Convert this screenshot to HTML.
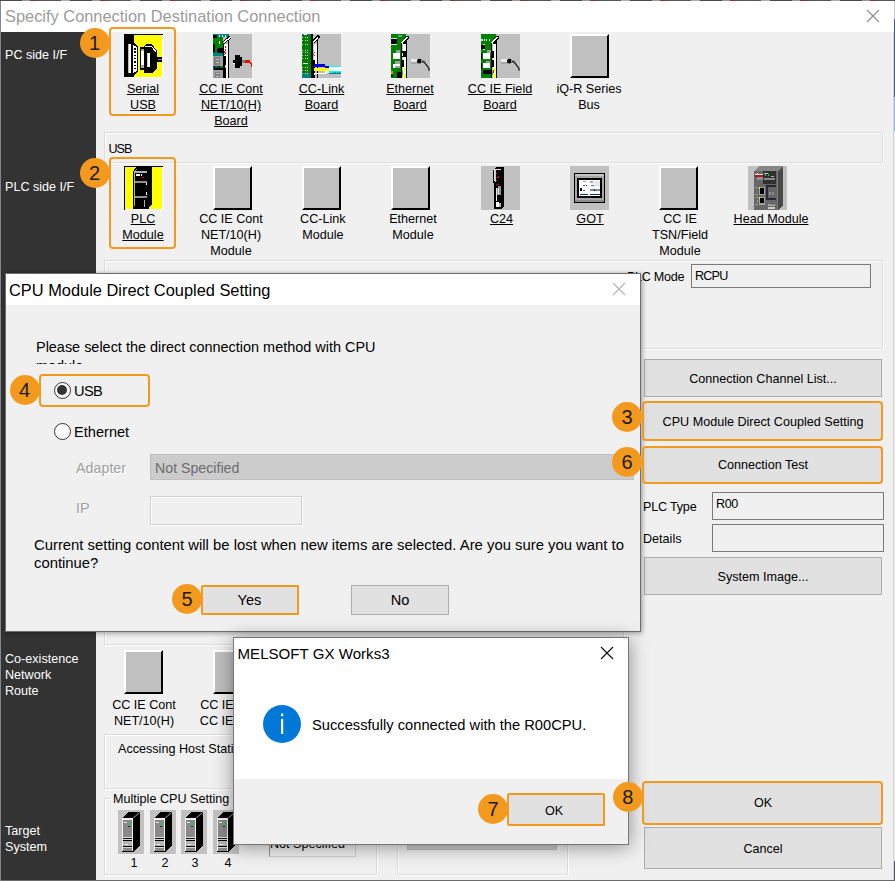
<!DOCTYPE html>
<html lang="en">
<head>
<meta charset="utf-8">
<title>Specify Connection Destination Connection</title>
<style>
*{box-sizing:border-box;margin:0;padding:0}
html,body{width:895px;height:881px;overflow:hidden}
body{position:relative;background:#f0f0f0;font-family:"Liberation Sans",sans-serif;font-size:12.6px;color:#000;line-height:16px}
.abs{position:absolute}
#win{position:absolute;left:0;top:0;width:895px;height:881px;overflow:hidden;background:#f0f0f0}
#topnoise{position:absolute;left:0;top:0;width:895px;height:1px;background:repeating-linear-gradient(90deg,#4a4a4a 0,#4a4a4a 22px,#999 22px,#999 30px,#7a3a3a 30px,#7a3a3a 36px,#555 36px,#555 61px,#aab 61px,#aab 70px)}
#titlebar{position:absolute;left:1px;top:1px;width:893px;height:31px;background:#fff}
#titlebar .t{position:absolute;left:4px;top:4px;font-size:16.4px;line-height:22px;color:#9c9c9c;white-space:nowrap}
#side{position:absolute;left:1px;top:32px;width:95px;height:849px;background:#333}
.sl{position:absolute;left:4px;color:#fff;white-space:nowrap;font-size:12.6px;line-height:16px}
.lbl{position:absolute;width:120px;text-align:center;white-space:nowrap;font-size:12.6px;line-height:16px}
.lbl.u{text-decoration:underline}
.gb{position:absolute;border:1px solid #dcdcdc;box-shadow:inset 1px 1px 0 #fff, 1px 1px 0 #fff}
.btn{position:absolute;background:#e1e1e1;border:1px solid #adadad;text-align:center;white-space:nowrap;font-size:12.6px}
.obox{position:absolute;border:2px solid #f39a1e;border-radius:4px}
.badge{position:absolute;width:30px;height:30px;border-radius:50%;background:#f39a1e;color:#1a1a1a;font-size:20px;line-height:30px;text-align:center}
.fld{position:absolute;border:1px solid #7a7a7a;background:#f0f0f0;font-size:12.6px;padding-left:4px;white-space:nowrap;overflow:hidden}
.raised{position:absolute;width:39px;height:44px;background:#c0c0c0;border-top:2px solid #fff;border-left:2px solid #fff;border-right:2px solid #000;border-bottom:2px solid #000}
.txt{position:absolute;white-space:nowrap}
.dlg{position:absolute;background:#f0f0f0;border:1px solid #6e6e6e;box-shadow:0 0 0 1px rgba(0,0,0,.10), 1px 2px 7px rgba(0,0,0,.5)}
.radio{position:absolute;width:17px;height:17px;border-radius:50%;border:1.4px solid #333;background:#fff}
.radio.on:after{content:"";position:absolute;left:2.1px;top:2.1px;width:10px;height:10px;border-radius:50%;background:#333}
</style>
</head>
<body>
<div id="win">

<div id="topnoise"></div>
<div id="titlebar"><span class="t">Specify Connection Destination Connection</span><svg class="abs" style="left:865px;top:8px" width="14" height="14" viewBox="0 0 14 14"><path d="M1 1L13 13M13 1L1 13" stroke="#8c8c8c" stroke-width="1.1" fill="none"/></svg></div>
<div id="side">
<span class="sl" style="top:15px">PC side I/F</span>
<span class="sl" style="top:147px">PLC side I/F</span>
<span class="sl" style="top:619px">Co-existence</span>
<span class="sl" style="top:635px">Network</span>
<span class="sl" style="top:651px">Route</span>
<span class="sl" style="top:791px">Target</span>
<span class="sl" style="top:807px">System</span>
</div>
<div class="abs" style="left:893px;top:32px;width:1px;height:849px;background:#d4d4d4"></div>
<div class="abs" style="left:894px;top:1px;width:1px;height:880px;background:linear-gradient(180deg,#ccc 0,#ccc 18px,#4a5a70 18px,#4a5a70 96px,#a8b8d0 96px,#a8b8d0 130px,#ececec 130px,#ececec 860px,#556 860px)"></div>
<div class="abs" style="left:0;top:879.5px;width:895px;height:1.5px;background:#6c6c6c"></div>
<div class="abs" style="left:0;top:1px;width:1px;height:880px;background:#84878e"></div>
<svg class="abs" style="left:124px;top:34px" width="39" height="44" viewBox="0 0 39 44" shape-rendering="crispEdges"><rect x="0" y="0" width="39" height="44" fill="#ffff00"/><rect x="0" y="0" width="10" height="44" fill="#000"/><rect x="0" y="0" width="39" height="1" fill="#000"/><path d="M10 9L14 12V38L10 41Z" fill="#000"/><rect x="4" y="10" width="3" height="29" fill="#fff"/><rect x="4" y="10" width="1" height="29" fill="#bbb"/><path d="M9 11L12.5 13V37L9 39Z" fill="#fff"/><rect x="10" y="14.0" width="1.5" height="1.5" fill="#000"/><rect x="10" y="17.3" width="1.5" height="1.5" fill="#000"/><rect x="10" y="20.6" width="1.5" height="1.5" fill="#000"/><rect x="10" y="23.9" width="1.5" height="1.5" fill="#000"/><rect x="10" y="27.2" width="1.5" height="1.5" fill="#000"/><rect x="10" y="30.5" width="1.5" height="1.5" fill="#000"/><rect x="10" y="33.8" width="1.5" height="1.5" fill="#000"/><path d="M16 13H20L22 10H28L33 17V35L28 39H20V36H16Z" fill="#000"/><rect x="17" y="15" width="3" height="19" fill="#fff"/><rect x="17" y="15" width="3" height="2" fill="#aaa"/><rect x="17" y="31" width="3" height="3" fill="#aaa"/><rect x="23" y="19" width="3" height="14" fill="#fff"/><rect x="23" y="19" width="1" height="14" fill="#ccc"/><path d="M21 12H27L31 16.5V18" stroke="#fff" stroke-width="1" fill="none"/><rect x="33" y="23" width="5" height="4.5" fill="#000"/><rect x="33.5" y="24.8" width="4.5" height="1" fill="#888"/><rect x="38" y="1" width="1" height="43" fill="#fff"/><rect x="0" y="43" width="39" height="1" fill="#fff"/></svg>
<svg class="abs" style="left:213px;top:34px" width="39" height="44" viewBox="0 0 39 44" shape-rendering="crispEdges"><rect x="0" y="0" width="39" height="44" fill="#c0c0c0"/><rect x="0" y="0" width="16" height="3" fill="#008080"/><rect x="6" y="1" width="1.2" height="1.6" fill="#fff"/><rect x="9" y="1" width="1.2" height="1.6" fill="#fff"/><rect x="11.5" y="1" width="1.2" height="1.6" fill="#fff"/><rect x="0" y="3" width="10" height="16" fill="#008000"/><rect x="0" y="1" width="4" height="3" fill="#000"/><rect x="0" y="10" width="1.5" height="8" fill="#000"/><rect x="4.5" y="7" width="0.8" height="3.5" fill="#fff"/><rect x="6.2" y="7" width="0.8" height="3" fill="#fff"/><rect x="5" y="14" width="5" height="5" fill="#000"/><rect x="4.3" y="15" width="1" height="3" fill="#000080"/><rect x="0" y="19" width="9.5" height="2.5" fill="#008080"/><rect x="0" y="22" width="9.5" height="10" fill="#a0a0a0"/><rect x="1" y="23" width="6" height="7.5" fill="#808080"/><rect x="2.5" y="24.8" width="3" height="1" fill="#c0c0c0"/><rect x="2.5" y="27.6" width="3" height="1" fill="#c0c0c0"/><rect x="0" y="32" width="9.5" height="2" fill="#008000"/><rect x="1.2" y="32" width="1" height="2" fill="#000080"/><rect x="4" y="32" width="1" height="2" fill="#000080"/><rect x="6.2" y="32" width="1" height="2" fill="#000080"/><rect x="0" y="34" width="9.5" height="2" fill="#000"/><rect x="0" y="34" width="1" height="2" fill="#008080"/><rect x="0" y="36" width="9.5" height="8" fill="#a0a0a0"/><rect x="1.5" y="37.5" width="5" height="6.5" fill="#808080"/><rect x="2.5" y="39" width="3" height="1" fill="#c0c0c0"/><rect x="2.5" y="41.5" width="3" height="1" fill="#c0c0c0"/><rect x="9.5" y="10" width="1.2" height="34" fill="#000"/><rect x="10.7" y="10" width="4.6" height="34" fill="#fff"/><rect x="15.2" y="5" width="1.2" height="39" fill="#000"/><path d="M10 9.5L17 3" stroke="#000" stroke-width="3.2"/><path d="M10.5 9L17.5 3" stroke="#fff" stroke-width="1.4"/><rect x="12" y="12" width="1" height="1.5" fill="#f00"/><rect x="12" y="15" width="1" height="1.5" fill="#f00"/><rect x="11.2" y="17.3" width="1" height="1.2" fill="#f00"/><rect x="12" y="18.3" width="1" height="1.2" fill="#f00"/><rect x="11.3" y="19.5" width="1" height="1.6" fill="#f00"/><rect x="11" y="22" width="1.6" height="22" fill="#000"/><rect x="12.4" y="31" width="0.8" height="3" fill="#c0c0c0"/><rect x="22" y="21" width="5" height="13" fill="#000"/><rect x="20" y="25.5" width="9" height="4.8" fill="#000"/><rect x="27" y="23" width="1.5" height="9" fill="#000"/><rect x="20" y="26.5" width="1.6" height="0.9" fill="#fff"/><rect x="20" y="28.6" width="1.6" height="0.9" fill="#fff"/><rect x="29" y="26" width="3" height="2.5" fill="#808080"/><rect x="32" y="26" width="5" height="2.6" fill="#f00"/><rect x="36.5" y="27.5" width="1.5" height="2" fill="#f00"/><rect x="37.8" y="29" width="1.2" height="4" fill="#f00"/></svg>
<svg class="abs" style="left:302px;top:34px" width="39" height="44" viewBox="0 0 39 44" shape-rendering="crispEdges"><rect x="0" y="0" width="39" height="44" fill="#c0c0c0"/><rect x="0" y="0" width="9.5" height="44" fill="#008000"/><rect x="0" y="39" width="9.5" height="5" fill="#008080"/><rect x="0" y="0" width="2" height="1" fill="#008080"/><rect x="5" y="0" width="4.5" height="1" fill="#008080"/><rect x="2" y="0" width="3" height="1" fill="#fff"/><rect x="0.3" y="3" width="1" height="1.2" fill="#e8c8e8"/><rect x="2.8" y="3" width="1.6" height="1.2" fill="#e8c8e8"/><rect x="5.4" y="3" width="1" height="1.2" fill="#e8c8e8"/><rect x="0.3" y="5.5" width="1" height="1.2" fill="#e8c8e8"/><rect x="2.8" y="5.5" width="1.6" height="1.2" fill="#e8c8e8"/><rect x="5.4" y="5.5" width="1" height="1.2" fill="#e8c8e8"/><rect x="0.3" y="10" width="1" height="1.2" fill="#e8c8e8"/><rect x="2.8" y="10" width="1.6" height="1.2" fill="#e8c8e8"/><rect x="5.4" y="10" width="1" height="1.2" fill="#e8c8e8"/><rect x="0.3" y="15.5" width="1" height="1.2" fill="#e8c8e8"/><rect x="2.8" y="15.5" width="1.6" height="1.2" fill="#e8c8e8"/><rect x="5.4" y="15.5" width="1" height="1.2" fill="#e8c8e8"/><rect x="0.3" y="18" width="1" height="1.2" fill="#e8c8e8"/><rect x="2.8" y="18" width="1.6" height="1.2" fill="#e8c8e8"/><rect x="5.4" y="18" width="1" height="1.2" fill="#e8c8e8"/><rect x="0.3" y="21" width="1" height="1.2" fill="#e8c8e8"/><rect x="2.8" y="21" width="1.6" height="1.2" fill="#e8c8e8"/><rect x="5.4" y="21" width="1" height="1.2" fill="#e8c8e8"/><rect x="0.3" y="23.5" width="1" height="1.2" fill="#e8c8e8"/><rect x="2.8" y="23.5" width="1.6" height="1.2" fill="#e8c8e8"/><rect x="5.4" y="23.5" width="1" height="1.2" fill="#e8c8e8"/><rect x="0.3" y="33" width="1" height="1.2" fill="#e8c8e8"/><rect x="2.8" y="33" width="1.6" height="1.2" fill="#e8c8e8"/><rect x="5.4" y="33" width="1" height="1.2" fill="#e8c8e8"/><rect x="0.3" y="36" width="1" height="1.2" fill="#e8c8e8"/><rect x="2.8" y="36" width="1.6" height="1.2" fill="#e8c8e8"/><rect x="5.4" y="36" width="1" height="1.2" fill="#e8c8e8"/><rect x="0.3" y="39" width="1" height="1.2" fill="#e8c8e8"/><rect x="2.8" y="39" width="1.6" height="1.2" fill="#e8c8e8"/><rect x="5.4" y="39" width="1" height="1.2" fill="#e8c8e8"/><rect x="0.5" y="28.5" width="5.5" height="1.5" fill="#fff"/><rect x="9.3" y="0" width="1.5" height="44" fill="#000"/><path d="M11 8L17 2" stroke="#000" stroke-width="3.4"/><path d="M11.2 8L16 3.2" stroke="#fff" stroke-width="1.3"/><rect x="10.8" y="10" width="4.4" height="20" fill="#fff"/><rect x="10.8" y="10" width="1.5" height="20" fill="#c0c0c0"/><rect x="15.2" y="6" width="1" height="38" fill="#000"/><rect x="10.8" y="26" width="2.5" height="18" fill="#000"/><rect x="11.6" y="18" width="1.6" height="1" fill="#f00"/><rect x="11.2" y="19.5" width="1" height="1.2" fill="#f00"/><rect x="12.2" y="21" width="1" height="1.4" fill="#f00"/><rect x="12" y="30" width="11" height="3.4" fill="#0000e0"/><rect x="23" y="32" width="4" height="2" fill="#0000c0"/><rect x="11.5" y="30.5" width="0.8" height="2.5" fill="#fff"/><rect x="12" y="34.2" width="15" height="2.5" fill="#ffff00"/><rect x="11.5" y="34.2" width="0.8" height="2.5" fill="#fff"/><rect x="27" y="31.6" width="12" height="1" fill="#00ffff"/><rect x="26" y="30" width="1" height="2" fill="#00ffff"/><rect x="27" y="32.6" width="12" height="4.4" fill="#fff"/><rect x="27" y="37" width="12" height="2.6" fill="#00ffff"/><rect x="27" y="39.4" width="12" height="0.8" fill="#008080"/><rect x="28.5" y="37.6" width="0.8" height="2" fill="#008080"/><rect x="30.7" y="37.6" width="0.8" height="2" fill="#008080"/><rect x="32.9" y="37.6" width="0.8" height="2" fill="#008080"/><rect x="35.1" y="37.6" width="0.8" height="2" fill="#008080"/><rect x="37.3" y="37.6" width="0.8" height="2" fill="#008080"/><rect x="23" y="37.4" width="4" height="1.6" fill="#fff"/><rect x="12" y="38.8" width="12" height="1.2" fill="#fff"/><rect x="11.5" y="38.5" width="1" height="2" fill="#fff"/></svg>
<svg class="abs" style="left:391px;top:34px" width="39" height="44" viewBox="0 0 39 44" shape-rendering="crispEdges"><rect x="0" y="0" width="39" height="44" fill="#c0c0c0"/><rect x="0" y="0" width="15" height="44" fill="#008000"/><rect x="7" y="0.5" width="3.5" height="2.5" fill="#909090"/><rect x="0" y="5.2" width="6" height="4.8" fill="#000"/><rect x="0" y="4.4" width="6" height="0.6" fill="#e0e0e0"/><rect x="0" y="10.2" width="6" height="0.6" fill="#e0e0e0"/><rect x="2.2" y="19" width="7" height="6" fill="#fff"/><rect x="5" y="16" width="4" height="3" fill="#a0a0a0"/><rect x="2.2" y="29.5" width="7" height="4" fill="#fff"/><rect x="4" y="27" width="5" height="2.5" fill="#a0a0a0"/><rect x="4" y="32" width="5" height="1.5" fill="#a0a0a0"/><rect x="0" y="37" width="1.6" height="3" fill="#c0a000"/><rect x="0" y="40.5" width="1.8" height="2.5" fill="#000"/><rect x="6" y="38" width="3.5" height="6" fill="#000"/><path d="M9.5 44V9L16 1.5H18V4L16.4 6V44Z" fill="#000"/><path d="M10.8 9.2L16.6 2.6" stroke="#fff" stroke-width="1.5"/><rect x="11" y="10" width="4.2" height="34" fill="#fff"/><rect x="11" y="10" width="1.3" height="34" fill="#c0c0c0"/><rect x="10.4" y="17" width="5" height="6" fill="#000"/><rect x="11.4" y="18.5" width="1" height="3.5" fill="#fff"/><rect x="11" y="26" width="1.6" height="7" fill="#000"/><rect x="12.5" y="34" width="2.2" height="3" fill="#ffff00"/><rect x="12.5" y="40" width="2.2" height="3.5" fill="#ffff00"/><rect x="10.6" y="37" width="1.2" height="4" fill="#00e000"/><rect x="15.2" y="6" width="1.2" height="38" fill="#000"/><rect x="20.2" y="25" width="6.3" height="4.6" fill="#e8e8e8"/><rect x="20.2" y="27.6" width="6.3" height="2" fill="#a8a8a8"/><circle cx="28.4" cy="27.2" r="2.4" fill="#000" shape-rendering="auto"/><rect x="30" y="26.2" width="3.5" height="1.8" fill="#909090"/><path d="M31 27.5L33.5 28.5L38 34.5V36.8" stroke="#000" stroke-width="1.1" fill="none" shape-rendering="auto"/></svg>
<svg class="abs" style="left:481px;top:34px" width="39" height="44" viewBox="0 0 39 44" shape-rendering="crispEdges"><rect x="0" y="0" width="39" height="44" fill="#c0c0c0"/><rect x="0" y="0" width="15" height="44" fill="#008000"/><rect x="0.3" y="5.4" width="1.2" height="1.4" fill="#e0e0e0"/><rect x="2.8" y="5.4" width="1.2" height="1.4" fill="#e0e0e0"/><rect x="5.2" y="5.4" width="1.2" height="1.4" fill="#e0e0e0"/><rect x="7.6" y="5.4" width="1.2" height="1.4" fill="#e0e0e0"/><rect x="0" y="11.2" width="4" height="3.6" fill="#000"/><rect x="1.5" y="10" width="2" height="0.8" fill="#e0e0e0"/><rect x="1.5" y="15.4" width="2" height="0.8" fill="#e0e0e0"/><rect x="2" y="19" width="7" height="6" fill="#fff"/><rect x="5.5" y="16" width="4" height="3" fill="#a0a0a0"/><rect x="0" y="19" width="1" height="6.5" fill="#000"/><rect x="2" y="29" width="7" height="5" fill="#fff"/><rect x="5" y="26.5" width="4" height="2" fill="#a0a0a0"/><rect x="0" y="29" width="1" height="6" fill="#000"/><rect x="2" y="36" width="8" height="4" fill="#000"/><path d="M9.5 44V9L16 1.5H18V4L16.4 6V44Z" fill="#000"/><path d="M10.8 9.2L16.6 2.6" stroke="#fff" stroke-width="1.5"/><rect x="11" y="10" width="4.2" height="34" fill="#fff"/><rect x="11" y="10" width="1.3" height="34" fill="#c0c0c0"/><rect x="11" y="17" width="1.6" height="7" fill="#000"/><rect x="11" y="26" width="1.6" height="7" fill="#000"/><rect x="12.5" y="34" width="2.2" height="3" fill="#ffff00"/><rect x="12.5" y="40" width="2.2" height="3.5" fill="#ffff00"/><rect x="10.6" y="37" width="1.2" height="4" fill="#00e000"/><rect x="12.2" y="36" width="0.9" height="3" fill="#f00"/><rect x="15.2" y="6" width="1.2" height="38" fill="#000"/><rect x="20.2" y="25" width="6.3" height="4.6" fill="#e8e8e8"/><rect x="20.2" y="27.6" width="6.3" height="2" fill="#a8a8a8"/><circle cx="28.4" cy="27.2" r="2.4" fill="#000" shape-rendering="auto"/><rect x="30" y="26.2" width="3.5" height="1.8" fill="#909090"/><path d="M31 27.5L33.5 28.5L38 34.5V36.8" stroke="#000" stroke-width="1.1" fill="none" shape-rendering="auto"/></svg>
<div class="raised" style="left:570px;top:34px"></div>
<div class="lbl u" style="left:83px;top:81px">Serial</div>
<div class="lbl u" style="left:83px;top:97px">USB</div>
<div class="lbl u" style="left:171px;top:81px">CC IE Cont</div>
<div class="lbl u" style="left:171px;top:97px">NET/10(H)</div>
<div class="lbl u" style="left:171px;top:113px">Board</div>
<div class="lbl u" style="left:261.5px;top:81px">CC-Link</div>
<div class="lbl u" style="left:261.5px;top:97px">Board</div>
<div class="lbl u" style="left:350px;top:81px">Ethernet</div>
<div class="lbl u" style="left:350px;top:97px">Board</div>
<div class="lbl u" style="left:440px;top:81px">CC IE Field</div>
<div class="lbl u" style="left:440px;top:97px">Board</div>
<div class="lbl" style="left:529px;top:81px">iQ-R Series</div>
<div class="lbl" style="left:529px;top:97px">Bus</div>
<div class="gb" style="left:104px;top:132px;width:779px;height:31px"></div>
<div class="txt" style="left:108.5px;top:141px;letter-spacing:-1px">USB</div>
<svg class="abs" style="left:124px;top:166px" width="39" height="44" viewBox="0 0 39 44" shape-rendering="crispEdges"><rect x="0" y="0" width="39" height="44" fill="#ffff00"/><path d="M9 44V5.5L12 1H28V38L24 43.5V44Z" fill="#000"/><rect x="9.6" y="5.2" width="13.6" height="1.4" fill="#b0b0b0"/><rect x="9.6" y="5.2" width="1.1" height="35" fill="#b0b0b0"/><path d="M9.8 5.5L12.5 2.5" stroke="#b0b0b0" stroke-width="0.8"/><rect x="12.2" y="8.2" width="3.6" height="1.6" fill="#fff"/><rect x="17.2" y="8.2" width="1" height="1.8" fill="#fff"/><rect x="18" y="11" width="2" height="0.9" fill="#f00"/><rect x="10.5" y="15.2" width="12.8" height="1.4" fill="#909090"/><rect x="21.5" y="16.8" width="1.8" height="2" fill="#fff"/><rect x="21.5" y="26" width="1.8" height="2.6" fill="#fff"/><rect x="10.5" y="30" width="12.8" height="1.5" fill="#909090"/><rect x="20.2" y="34" width="0.9" height="6.6" fill="#b0b0b0"/><rect x="0" y="0" width="39" height="1" fill="#000"/><rect x="0" y="0" width="1" height="44" fill="#000"/><rect x="38" y="1" width="1" height="43" fill="#fff"/><rect x="1" y="43" width="38" height="1" fill="#fff"/></svg>
<div class="raised" style="left:213px;top:166px"></div>
<div class="raised" style="left:302px;top:166px"></div>
<div class="raised" style="left:391px;top:166px"></div>
<svg class="abs" style="left:481px;top:166px" width="39" height="44" viewBox="0 0 39 44" shape-rendering="crispEdges"><rect x="0" y="0" width="39" height="44" fill="#c0c0c0"/><path d="M13 43V17H12V4L15 1H23V40L21 43Z" fill="#000"/><path d="M13.2 15V4.5L14.5 3.2H20" stroke="#e0e0e0" stroke-width="1" fill="none"/><rect x="13.8" y="4" width="1.4" height="11.5" fill="#c8c8c8"/><rect x="15" y="7" width="1.1" height="1.3" fill="#f00"/><rect x="15" y="11" width="1.1" height="1.3" fill="#f00"/><rect x="15" y="14" width="1.1" height="1.3" fill="#f00"/><rect x="17.2" y="10.2" width="1.1" height="1.3" fill="#f00"/><rect x="15" y="18" width="1.1" height="1.3" fill="#f00"/><rect x="17" y="18" width="1.1" height="1.3" fill="#f00"/><rect x="15" y="19.5" width="4.6" height="9" fill="#909090"/><rect x="15" y="22" width="1.3" height="13" fill="#e8e8e8"/><rect x="17" y="22" width="1.2" height="6" fill="#e8e8e8"/><rect x="15" y="19.5" width="2" height="2" fill="#000"/><rect x="15.2" y="36" width="3" height="4.6" fill="#fff"/><rect x="18.2" y="37" width="1.5" height="3.6" fill="#b0b0b0"/></svg>
<svg class="abs" style="left:570px;top:166px" width="39" height="44" viewBox="0 0 39 44" shape-rendering="crispEdges"><rect x="0" y="0" width="39" height="44" fill="#c0c0c0"/><rect x="4" y="7" width="31" height="30" fill="#000"/><rect x="5" y="8" width="29" height="28" fill="#a8a8a8"/><rect x="5" y="8" width="29" height="2.4" fill="#c4c4c4"/><rect x="5" y="33.6" width="29" height="2.4" fill="#8c8c8c"/><rect x="7" y="12" width="25" height="20" fill="#000"/><rect x="9" y="14" width="21" height="16" fill="#fff"/><rect x="13" y="15" width="3" height="1.2" fill="#9ab"/><rect x="20" y="15" width="3" height="1.6" fill="#9ab"/><rect x="13" y="19" width="2" height="1.4" fill="#468"/><rect x="16" y="19" width="1" height="1.4" fill="#036"/><rect x="21" y="19" width="3" height="1.4" fill="#579"/><rect x="10" y="22.4" width="2" height="3" fill="#012"/><rect x="12.6" y="24" width="2" height="1" fill="#357"/><rect x="20" y="23" width="10" height="1.5" fill="#789"/><rect x="24" y="23" width="1" height="1.5" fill="#036"/><rect x="10" y="28" width="8" height="1" fill="#036"/><rect x="20" y="28" width="10" height="1" fill="#036"/><rect x="24" y="14.5" width="6" height="6" fill="#e4e8f0"/></svg>
<div class="raised" style="left:659px;top:166px"></div>
<svg class="abs" style="left:748px;top:166px" width="39" height="44" viewBox="0 0 39 44" shape-rendering="crispEdges"><rect x="0" y="0" width="39" height="44" fill="#c0c0c0"/><path d="M6 44V5L11 0H35V39L30 44Z" fill="#484848"/><path d="M6 5L11 0H35L30 5Z" fill="#868686"/><rect x="6" y="5" width="23" height="39" fill="#686868"/><rect x="29" y="5" width="1.2" height="39" fill="#787878"/><rect x="15" y="5" width="13" height="12.5" fill="#303030"/><rect x="7" y="7.5" width="8" height="1.8" fill="#e8e8e8"/><rect x="7" y="9.3" width="8" height="1.2" fill="#b01010"/><rect x="9" y="6.5" width="1.2" height="1" fill="#e8e8e8"/><rect x="9" y="11.2" width="5.6" height="2.4" fill="#909090"/><rect x="16" y="7" width="4" height="0.8" fill="#c0c0c0"/><rect x="16.8" y="8" width="1.5" height="2" fill="#00e040"/><rect x="19.8" y="8" width="1.5" height="2" fill="#00e040"/><rect x="23" y="9.6" width="3" height="0.9" fill="#b0b0b0"/><rect x="16" y="12" width="11" height="1.8" fill="#8c8c8c"/><rect x="18" y="19" width="10" height="14.5" fill="#282838"/><rect x="19.8" y="21" width="8.2" height="11" fill="#666"/><rect x="21" y="26" width="2" height="2.6" fill="#8a8a8a"/><rect x="23.8" y="26" width="2" height="2.6" fill="#8a8a8a"/><rect x="10.6" y="21" width="6.4" height="8" fill="#a0a0a0"/><rect x="11.8" y="22" width="4.4" height="6" fill="#000"/><rect x="10.8" y="21" width="1" height="2" fill="#ffff00"/><rect x="10.6" y="30.5" width="6.4" height="8" fill="#a0a0a0"/><rect x="11.8" y="31.8" width="4.4" height="4.8" fill="#000"/><rect x="10.8" y="30.5" width="1" height="2.6" fill="#ffff00"/><rect x="7" y="21" width="3" height="0.9" fill="#999"/><rect x="7" y="28" width="3" height="0.9" fill="#999"/><rect x="7" y="30.6" width="3" height="1.6" fill="#999"/><rect x="7" y="37.6" width="3" height="1.6" fill="#999"/><rect x="9" y="34" width="1" height="2" fill="#999"/><rect x="20" y="37.6" width="7" height="2.4" fill="#aaa"/><rect x="20" y="41.4" width="7" height="1.8" fill="#ccc"/><rect x="21.5" y="36.6" width="1.2" height="2" fill="#686868"/><rect x="24.4" y="36.6" width="1.2" height="2" fill="#686868"/></svg>
<div class="lbl u" style="left:83px;top:211px">PLC</div>
<div class="lbl u" style="left:83px;top:227px">Module</div>
<div class="lbl" style="left:171px;top:211px">CC IE Cont</div>
<div class="lbl" style="left:171px;top:227px">NET/10(H)</div>
<div class="lbl" style="left:171px;top:243px">Module</div>
<div class="lbl" style="left:262.8px;top:211px">CC-Link</div>
<div class="lbl" style="left:262.8px;top:227px">Module</div>
<div class="lbl" style="left:353px;top:211px">Ethernet</div>
<div class="lbl" style="left:353px;top:227px">Module</div>
<div class="lbl u" style="left:441.5px;top:211px">C24</div>
<div class="lbl u" style="left:530px;top:211px">GOT</div>
<div class="lbl" style="left:620px;top:211px">CC IE</div>
<div class="lbl" style="left:620px;top:227px">TSN/Field</div>
<div class="lbl" style="left:620px;top:243px">Module</div>
<div class="lbl u" style="left:711px;top:211px">Head Module</div>
<div class="gb" style="left:104px;top:260px;width:779px;height:89px"></div>
<div class="txt" style="left:627px;top:269px;letter-spacing:-0.3px">PLC Mode</div>
<div class="fld" style="left:691px;top:264px;width:180px;height:24px;line-height:22px;letter-spacing:-0.8px;padding-left:3px">RCPU</div>
<div class="btn" style="left:644px;top:359px;width:238px;height:38px;line-height:39px">Connection Channel List...</div>
<div class="btn" style="left:643px;top:402px;width:240px;height:38px;line-height:39px;border-color:#e1e1e1">CPU Module Direct Coupled Setting</div>
<div class="btn" style="left:643px;top:447px;width:240px;height:36px;line-height:35px;border-color:#e1e1e1">Connection Test</div>
<div class="txt" style="left:643px;top:499px;letter-spacing:-0.2px">PLC Type</div>
<div class="fld" style="left:712px;top:492px;width:172px;height:28px;line-height:22px;letter-spacing:-0.4px;padding-left:3px">R00</div>
<div class="txt" style="left:643px;top:531px">Details</div>
<div class="fld" style="left:712px;top:524px;width:172px;height:28px"></div>
<div class="btn" style="left:644px;top:557px;width:238px;height:38px;line-height:39px">System Image...</div>
<div class="btn" style="left:643px;top:782px;width:240px;height:42px;line-height:40px;border-color:#e1e1e1">OK</div>
<div class="btn" style="left:644px;top:827px;width:238px;height:42px;line-height:43px">Cancel</div>
<div class="gb" style="left:104px;top:600px;width:520px;height:45px"></div>
<div class="raised" style="left:124px;top:650px"></div>
<div class="raised" style="left:213px;top:650px"></div>
<div class="lbl" style="left:84px;top:697px">CC IE Cont</div>
<div class="lbl" style="left:84px;top:713px">NET/10(H)</div>
<div class="lbl" style="left:172px;top:697px">CC IE Cont</div>
<div class="lbl" style="left:172px;top:713px">CC IE Field</div>
<div class="gb" style="left:104px;top:734px;width:520px;height:55px"></div>
<div class="txt" style="left:118px;top:741px">Accessing Host Station</div>
<div class="gb" style="left:104px;top:798px;width:273px;height:77px"></div>
<div class="txt" style="left:111px;top:791px;background:#f0f0f0;padding:0 2px">Multiple CPU Setting</div>
<svg class="abs" style="left:118px;top:810px" width="26" height="44" viewBox="0 0 26 44" shape-rendering="crispEdges"><rect x="0" y="0" width="26" height="44" fill="#c2c0c0"/><path d="M4 42V8L10 2H22V35L15 42Z" fill="#000"/><rect x="4" y="8" width="11" height="33.2" fill="#f2f2f2"/><rect x="5.4" y="9.6" width="8.2" height="31" fill="#8a8888"/><rect x="9.8" y="12.9" width="2.2" height="1.3" fill="#00e040"/><rect x="9.8" y="15" width="2.2" height="1.3" fill="#00e040"/><rect x="9.8" y="16.4" width="2.2" height="0.7" fill="#222"/><rect x="5.9" y="12.1" width="2.9" height="0.9" fill="#e8e8e8"/><rect x="5" y="27.4" width="9.2" height="0.8" fill="#e0e0e0"/><rect x="5" y="28.2" width="9.2" height="1" fill="#000"/><rect x="5" y="29.2" width="9.2" height="0.9" fill="#d8d8d8"/><rect x="5" y="30.1" width="9.2" height="1.1" fill="#000"/><rect x="5" y="31.2" width="9.2" height="4.7" fill="#b4b4b4"/><rect x="7" y="33.6" width="3" height="0.9" fill="#e4e4e4"/><rect x="5" y="35.9" width="9.2" height="1.1" fill="#000"/><rect x="5" y="37" width="9.2" height="1" fill="#d8d8d8"/><rect x="4" y="41" width="11" height="1" fill="#000"/><path d="M15.2 8L21.6 2.6" stroke="#e8e8e8" stroke-width="0.7" shape-rendering="auto"/></svg>
<svg class="abs" style="left:150px;top:810px" width="26" height="44" viewBox="0 0 26 44" shape-rendering="crispEdges"><rect x="0" y="0" width="26" height="44" fill="#c2c0c0"/><path d="M4 42V8L10 2H22V35L15 42Z" fill="#000"/><rect x="4" y="8" width="11" height="33.2" fill="#f2f2f2"/><rect x="5.4" y="9.6" width="8.2" height="31" fill="#8a8888"/><rect x="9.8" y="12.9" width="2.2" height="1.3" fill="#00e040"/><rect x="9.8" y="15" width="2.2" height="1.3" fill="#00e040"/><rect x="9.8" y="16.4" width="2.2" height="0.7" fill="#222"/><rect x="5.9" y="12.1" width="2.9" height="0.9" fill="#e8e8e8"/><rect x="5" y="27.4" width="9.2" height="0.8" fill="#e0e0e0"/><rect x="5" y="28.2" width="9.2" height="1" fill="#000"/><rect x="5" y="29.2" width="9.2" height="0.9" fill="#d8d8d8"/><rect x="5" y="30.1" width="9.2" height="1.1" fill="#000"/><rect x="5" y="31.2" width="9.2" height="4.7" fill="#b4b4b4"/><rect x="7" y="33.6" width="3" height="0.9" fill="#e4e4e4"/><rect x="5" y="35.9" width="9.2" height="1.1" fill="#000"/><rect x="5" y="37" width="9.2" height="1" fill="#d8d8d8"/><rect x="4" y="41" width="11" height="1" fill="#000"/><path d="M15.2 8L21.6 2.6" stroke="#e8e8e8" stroke-width="0.7" shape-rendering="auto"/></svg>
<svg class="abs" style="left:181px;top:810px" width="26" height="44" viewBox="0 0 26 44" shape-rendering="crispEdges"><rect x="0" y="0" width="26" height="44" fill="#c2c0c0"/><path d="M4 42V8L10 2H22V35L15 42Z" fill="#000"/><rect x="4" y="8" width="11" height="33.2" fill="#f2f2f2"/><rect x="5.4" y="9.6" width="8.2" height="31" fill="#8a8888"/><rect x="9.8" y="12.9" width="2.2" height="1.3" fill="#00e040"/><rect x="9.8" y="15" width="2.2" height="1.3" fill="#00e040"/><rect x="9.8" y="16.4" width="2.2" height="0.7" fill="#222"/><rect x="5.9" y="12.1" width="2.9" height="0.9" fill="#e8e8e8"/><rect x="5" y="27.4" width="9.2" height="0.8" fill="#e0e0e0"/><rect x="5" y="28.2" width="9.2" height="1" fill="#000"/><rect x="5" y="29.2" width="9.2" height="0.9" fill="#d8d8d8"/><rect x="5" y="30.1" width="9.2" height="1.1" fill="#000"/><rect x="5" y="31.2" width="9.2" height="4.7" fill="#b4b4b4"/><rect x="7" y="33.6" width="3" height="0.9" fill="#e4e4e4"/><rect x="5" y="35.9" width="9.2" height="1.1" fill="#000"/><rect x="5" y="37" width="9.2" height="1" fill="#d8d8d8"/><rect x="4" y="41" width="11" height="1" fill="#000"/><path d="M15.2 8L21.6 2.6" stroke="#e8e8e8" stroke-width="0.7" shape-rendering="auto"/></svg>
<svg class="abs" style="left:213px;top:810px" width="26" height="44" viewBox="0 0 26 44" shape-rendering="crispEdges"><rect x="0" y="0" width="26" height="44" fill="#c2c0c0"/><path d="M4 42V8L10 2H22V35L15 42Z" fill="#000"/><rect x="4" y="8" width="11" height="33.2" fill="#f2f2f2"/><rect x="5.4" y="9.6" width="8.2" height="31" fill="#8a8888"/><rect x="9.8" y="12.9" width="2.2" height="1.3" fill="#00e040"/><rect x="9.8" y="15" width="2.2" height="1.3" fill="#00e040"/><rect x="9.8" y="16.4" width="2.2" height="0.7" fill="#222"/><rect x="5.9" y="12.1" width="2.9" height="0.9" fill="#e8e8e8"/><rect x="5" y="27.4" width="9.2" height="0.8" fill="#e0e0e0"/><rect x="5" y="28.2" width="9.2" height="1" fill="#000"/><rect x="5" y="29.2" width="9.2" height="0.9" fill="#d8d8d8"/><rect x="5" y="30.1" width="9.2" height="1.1" fill="#000"/><rect x="5" y="31.2" width="9.2" height="4.7" fill="#b4b4b4"/><rect x="7" y="33.6" width="3" height="0.9" fill="#e4e4e4"/><rect x="5" y="35.9" width="9.2" height="1.1" fill="#000"/><rect x="5" y="37" width="9.2" height="1" fill="#d8d8d8"/><rect x="4" y="41" width="11" height="1" fill="#000"/><path d="M15.2 8L21.6 2.6" stroke="#e8e8e8" stroke-width="0.7" shape-rendering="auto"/></svg>
<div class="lbl" style="left:74px;top:855px">1</div>
<div class="lbl" style="left:105px;top:855px">2</div>
<div class="lbl" style="left:135px;top:855px">3</div>
<div class="lbl" style="left:168px;top:855px">4</div>
<div class="fld" style="left:269px;top:833px;width:87px;height:24px;line-height:21px;border-color:#999 #d0d0d0 #d0d0d0 #999;padding-left:0">Not Specified</div>
<div class="gb" style="left:397px;top:798px;width:171px;height:77px"></div>
<div class="btn" style="left:407px;top:820px;width:150px;height:30px;line-height:31px;background:#ccc;border-color:#bfbfbf"></div>
<div class="dlg" style="left:5px;top:273px;width:636px;height:359px;box-shadow:1px 1px 5px rgba(0,0,0,.38)">
<div class="abs" style="left:0;top:0;width:634px;height:31px;background:#fff"></div>
<div class="txt" style="left:3px;top:4.5px;font-size:16.4px;line-height:22px">CPU Module Direct Coupled Setting</div>
<svg class="abs" style="left:606px;top:8px" width="14" height="14" viewBox="0 0 14 14"><path d="M1 1L13 13M13 1L1 13" stroke="#b4b4b4" stroke-width="1.1" fill="none"/></svg>
<div class="abs" style="left:30px;top:64px;width:360px;height:26px;overflow:hidden;font-size:14.45px;line-height:19px">Please select the direct connection method with CPU module.</div>
<div class="radio on" style="left:47.5px;top:107.5px"></div>
<div class="txt" style="left:68px;top:108px;font-size:14.6px;line-height:19px;letter-spacing:-0.6px">USB</div>
<div class="radio" style="left:47.5px;top:148.5px"></div>
<div class="txt" style="left:68px;top:148.5px;font-size:14.6px;line-height:19px">Ethernet</div>
<div class="txt" style="left:70px;top:185px;font-size:14.3px;line-height:19px;color:#a0a0a0;text-shadow:1px 1px 0 #fff">Adapter</div>
<div class="abs" style="left:144px;top:180px;width:484px;height:26px;background:#ccc;border:1px solid #bfbfbf;font-size:14.2px;line-height:26px;padding-left:4px;color:#6d6d6d">Not Specified</div>
<div class="txt" style="left:70px;top:225px;font-size:14.6px;line-height:19px;color:#a0a0a0;text-shadow:1px 1px 0 #fff">IP</div>
<div class="abs" style="left:144px;top:222px;width:152px;height:29px;background:#f0f0f0;border:1px solid #d0d0d0;box-shadow:inset 1px 1px 0 #fff,1px 1px 0 #fff"></div>
<div class="abs" style="left:28px;top:263px;width:610px;font-size:14.85px;line-height:17.5px">Current setting content will be lost when new items are selected. Are you sure you want to continue?</div>
<div class="btn" style="left:196px;top:311px;width:97px;height:30px;line-height:28.5px;font-size:14.6px;padding-right:2px">Yes</div>
<div class="btn" style="left:345px;top:311px;width:98px;height:30px;line-height:28.5px;font-size:14.6px">No</div>
</div>
<div class="dlg" style="left:233px;top:637px;width:396px;height:208px;background:#fff;border-color:#777;box-shadow:0 2px 18px rgba(0,0,0,.42)">
<div class="abs" style="left:0;top:141px;width:394px;height:65px;background:#f0f0f0"></div>
<div class="txt" style="left:3.5px;top:5px;font-size:15.1px;line-height:22px">MELSOFT GX Works3</div>
<svg class="abs" style="left:366px;top:8px" width="14" height="14" viewBox="0 0 14 14"><path d="M1 1L13 13M13 1L1 13" stroke="#111" stroke-width="1.2" fill="none"/></svg>
<svg class="abs" style="left:28px;top:66px" width="40" height="40" viewBox="0 0 40 40"><circle cx="20" cy="20" r="19" fill="#0078d7"/><rect x="19" y="15" width="2.2" height="15" fill="#fff"/><rect x="19" y="9.6" width="2.2" height="2.6" fill="#fff"/></svg>
<div class="txt" style="left:78px;top:77px;font-size:14.7px;line-height:20px">Successfully connected with the R00CPU.</div>
<div class="btn" style="left:274px;top:156px;width:97px;height:32px;line-height:32px;font-size:12.6px;padding-right:5px">OK</div>
</div>
<div class="obox" style="left:109px;top:27px;width:67px;height:89px"></div>
<div class="obox" style="left:109px;top:157px;width:67px;height:92px"></div>
<div class="obox" style="left:642px;top:401px;width:241px;height:40px"></div>
<div class="obox" style="left:642px;top:446px;width:241px;height:38px"></div>
<div class="obox" style="left:642px;top:781px;width:241px;height:44px"></div>
<div class="badge" style="left:79.5px;top:28px">1</div>
<div class="badge" style="left:79.5px;top:158px">2</div>
<div class="badge" style="left:612px;top:402px">3</div>
<div class="badge" style="left:612px;top:447px">6</div>
<div class="badge" style="left:612.8px;top:782px">8</div>
<div class="obox" style="left:39px;top:374px;width:111px;height:33px"></div>
<div class="obox" style="left:201px;top:585px;width:98px;height:30px;border-radius:2px"></div>
<div class="badge" style="left:9.5px;top:374.5px">4</div>
<div class="badge" style="left:172px;top:584px">5</div>
<div class="obox" style="left:507px;top:793px;width:98px;height:33px;border-radius:2px"></div>
<div class="badge" style="left:478px;top:794px">7</div>
</div>
</body>
</html>
